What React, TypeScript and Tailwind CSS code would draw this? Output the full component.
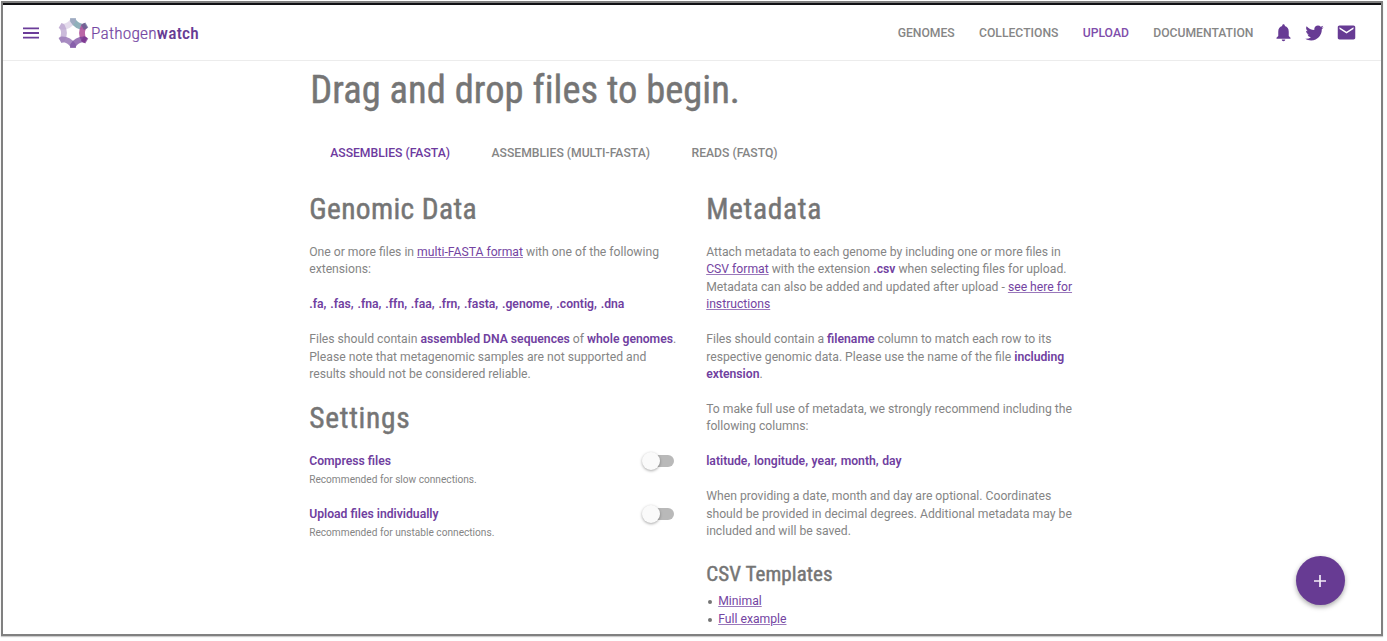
import type { ReactNode } from "react";

const HEADING =
  "font-['Roboto_Condensed',Roboto,sans-serif] font-normal whitespace-nowrap text-[#757575] [-webkit-text-stroke:0.45px_#757575]";

function Logo() {
  return (
    <svg viewBox="-16 -16 32 32" className="h-8 w-8 shrink-0" fill="none" strokeWidth="5.8">
      <path d="M0 -14.8V-12.5Q3.6 -6.3 10.8 -6.3L12.9 -7.5" stroke="#8fb0ba" />
      <path d="M12.9 -7.5L10.8 -6.3Q7.2 0 10.8 6.3L12.9 7.5" stroke="#b2559d" opacity="0.9" />
      <path d="M12.9 7.5L10.8 6.3Q3.6 6.3 0 12.5V14.8" stroke="#6f3c97" opacity="0.7" />
      <path d="M0 14.8V12.5Q-3.6 6.3 -10.8 6.3L-12.9 7.5" stroke="#7f55a5" opacity="0.68" />
      <path d="M-12.9 7.5L-10.8 6.3Q-7.2 0 -10.8 -6.3L-12.9 -7.5" stroke="#a184bd" opacity="0.55" />
      <path d="M-12.9 -7.5L-10.8 -6.3Q-3.6 -6.3 0 -12.5V-14.8" stroke="#b8a0cc" opacity="0.38" />
      <path d="M13.8 -8L9.6 -5.6" stroke="#5f6391" opacity="0.75" />
      <path d="M13.8 8L9.6 5.6" stroke="#7b3790" opacity="0.75" />
    </svg>
  );
}

function NavLink({ active, children }: { active?: boolean; children: ReactNode }) {
  return (
    <a className={active ? "text-[#804eab]" : "text-[#868686]"} href="#">
      {children}
    </a>
  );
}

function Link({ children }: { children: ReactNode }) {
  return (
    <a href="#" className="text-[#7444a2] underline decoration-[#9a78bb] decoration-1 underline-offset-1">
      {children}
    </a>
  );
}

function Strong({ children }: { children: ReactNode }) {
  return <strong className="font-semibold text-[#7040a0]">{children}</strong>;
}

function Setting({ title, hint }: { title: string; hint: string }) {
  return (
    <div className="flex h-[53px] justify-between">
      <div>
        <div className="pt-px font-semibold text-[#7040a0]">{title}</div>
        <div className="text-[10.15px] leading-[17px]">{hint}</div>
      </div>
      <button role="switch" aria-checked="false" aria-label={title} className="flex h-[18px] w-8 items-center">
        <span className="z-10 size-[18px] shrink-0 rounded-full bg-[#fafafa] shadow-[0_1px_3px_rgba(0,0,0,0.35)]" />
        <span className="-ml-4 h-3 w-[30px] shrink-0 rounded-full bg-[#b9b9b9]" />
      </button>
    </div>
  );
}

export default function App() {
  return (
    <div className="h-[641px] w-[1387px] overflow-hidden bg-white p-px font-[Roboto,sans-serif] text-[12.18px] leading-[17.43px] text-[#858585]">
      <div className="flex h-[635px] w-[1382px] flex-col border-2 border-[#808080] shadow-[0_1px_1px_rgba(0,0,0,0.2)]">
        <div className="h-[2px] shrink-0 bg-[#111114]" />
        <header className="flex h-14 shrink-0 items-center justify-between border-b border-[#ececec] pr-[24.5px] pl-5">
          <div className="flex items-center">
            <svg viewBox="0 0 16 12" className="mr-[18px] h-3 w-4" fill="#6b3c99">
              <path d="M0 .5h16v1.8H0zM0 5.1h16v1.8H0zM0 9.7h16v1.8H0z" />
            </svg>
            <Logo />
            <div className="ml-[2px] pt-px font-['Roboto_Condensed',Roboto,sans-serif] text-[17.4px] leading-5 tracking-[0.2px] whitespace-nowrap text-[#7546a3]">
              <span className="font-light [-webkit-text-stroke:0.2px_#7546a3]">Pathogen</span>
              <span className="font-medium text-[#673c94]">watch</span>
            </div>
          </div>
          <nav className="flex items-center font-medium">
            <div className="mr-[19px] flex gap-[24.3px] pt-[2px]">
              <NavLink>GENOMES</NavLink>
              <NavLink>COLLECTIONS</NavLink>
              <NavLink active>UPLOAD</NavLink>
              <NavLink>DOCUMENTATION</NavLink>
            </div>
            <div className="flex gap-[10.5px] text-[#673b94]">
              <svg viewBox="0 0 24 24" className="size-[21px]" fill="currentColor">
                <path d="M12 22c1.1 0 2-.9 2-2h-4c0 1.1.89 2 2 2zm6-6v-5c0-3.07-1.64-5.64-4.5-6.32V4c0-.83-.67-1.5-1.5-1.5s-1.5.67-1.5 1.5v.68C7.63 5.36 6 7.92 6 11v5l-2 2v1h16v-1l-2-2z" />
              </svg>
              <svg viewBox="0 0 24 24" className="size-[21px]" fill="currentColor">
                <path d="M22.46 6c-.77.35-1.6.58-2.46.69.88-.53 1.56-1.37 1.88-2.38-.83.5-1.75.85-2.72 1.05C18.37 4.5 17.26 4 16 4c-2.35 0-4.27 1.92-4.27 4.29 0 .34.04.67.11.98C8.28 9.09 5.11 7.38 3 4.79c-.37.63-.58 1.37-.58 2.15 0 1.49.75 2.81 1.91 3.56-.71 0-1.37-.2-1.95-.5v.03c0 2.08 1.48 3.82 3.44 4.21a4.22 4.22 0 0 1-1.93.07 4.28 4.28 0 0 0 4 2.98 8.521 8.521 0 0 1-5.33 1.84c-.34 0-.68-.02-1.02-.06C3.44 20.29 5.7 21 8.12 21 16 21 20.33 14.46 20.33 8.79c0-.19 0-.37-.01-.56.84-.6 1.56-1.36 2.14-2.23z" />
              </svg>
              <svg viewBox="0 0 24 24" className="size-[21px]" fill="currentColor">
                <path d="M20 4H4c-1.1 0-1.99.9-1.99 2L2 18c0 1.1.9 2 2 2h16c1.1 0 2-.9 2-2V6c0-1.1-.9-2-2-2zm0 4l-8 5-8-5V6l8 5 8-5v2z" />
              </svg>
            </div>
          </nav>
        </header>
        <main className="relative min-h-0 flex-1 overflow-hidden pl-[306.2px]">
          <h1 className={`${HEADING} mt-[5px] pl-px text-[38.5px] leading-[48px] tracking-[0.03px]`}>
            Drag and drop files to begin.
          </h1>
          <div className="mt-[31px] flex h-[18px] items-center gap-[41.5px] pl-[21px] font-medium">
            <span className="text-[#6d3a9e]">ASSEMBLIES (FASTA)</span>
            <span>ASSEMBLIES (MULTI-FASTA)</span>
            <span>READS (FASTQ)</span>
          </div>
          <div className="mt-7 flex gap-[27px]">
            <section className="w-[370px]">
              <h2 className={`${HEADING} text-[29.5px] leading-9 tracking-[0.35px]`}>Genomic Data</h2>
              <p className="mt-[17px]">
                One or more files in <Link>multi-FASTA format</Link> with one of the following
                <br />
                extensions:
              </p>
              <p className="mt-[17.43px] [word-spacing:0.8px]">
                <Strong>.fa, .fas, .fna, .ffn, .faa, .frn, .fasta, .genome, .contig, .dna</Strong>
              </p>
              <p className="mt-[17.43px] whitespace-nowrap">
                Files should contain <Strong>assembled DNA sequences</Strong> of <Strong>whole genomes</Strong>.
                <br />
                Please note that metagenomic samples are not supported and
                <br />
                results should not be considered reliable.
              </p>
              <h2 className={`${HEADING} mt-[17px] text-[29.5px] leading-9 tracking-[0.7px]`}>Settings</h2>
              <div className="mt-4 w-[365px]">
                <Setting title="Compress files" hint="Recommended for slow connections." />
                <Setting title="Upload files individually" hint="Recommended for unstable connections." />
              </div>
            </section>
            <section className="w-[380px] whitespace-nowrap">
              <h2 className={`${HEADING} text-[29.5px] leading-9 tracking-[0.65px]`}>Metadata</h2>
              <p className="mt-[17px]">
                Attach metadata to each genome by including one or more files in
                <br />
                <Link>CSV format</Link> with the extension <Strong>.csv</Strong> when selecting files for upload.
                <br />
                Metadata can also be added and updated after upload - <Link>see here for</Link>
                <br />
                <Link>instructions</Link>
              </p>
              <p className="mt-[17.43px]">
                Files should contain a <Strong>filename</Strong> column to match each row to its
                <br />
                respective genomic data. Please use the name of the file <Strong>including</Strong>
                <br />
                <Strong>extension</Strong>.
              </p>
              <p className="mt-[17.43px]">
                To make full use of metadata, we strongly recommend including the
                <br />
                following columns:
              </p>
              <p className="mt-[17.43px] [word-spacing:0.6px]">
                <Strong>latitude, longitude, year, month, day</Strong>
              </p>
              <p className="mt-[17.43px]">
                When providing a date, month and day are optional. Coordinates
                <br />
                should be provided in decimal degrees. Additional metadata may be
                <br />
                included and will be saved.
              </p>
              <h3 className={`${HEADING} mt-[20px] text-[21px] leading-7 tracking-[0.08px]`}>CSV Templates</h3>
              <ul className="mt-[5px]">
                {["Minimal", "Full example"].map((name) => (
                  <li key={name} className="flex items-center gap-[6px] pl-[2px]">
                    <span className="size-1 rounded-full bg-[#757575]" />
                    <Link>{name}</Link>
                  </li>
                ))}
              </ul>
            </section>
          </div>
          <button
            aria-label="Add files"
            className="absolute right-[36.5px] bottom-[29px] flex size-[49px] items-center justify-center rounded-full bg-[#673b93] shadow-[0_2px_5px_rgba(0,0,0,0.35)]"
          >
            <svg viewBox="0 0 12 12" className="size-3" stroke="#f3edf8" strokeWidth="1.7">
              <path d="M6 0v12M0 6h12" />
            </svg>
          </button>
        </main>
      </div>
    </div>
  );
}
